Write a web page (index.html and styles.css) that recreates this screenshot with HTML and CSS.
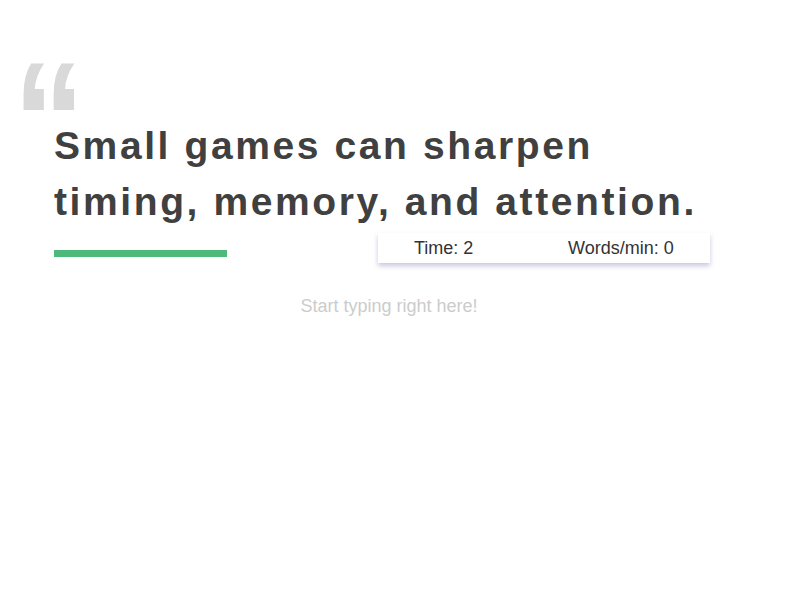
FILE: index.html
```html
<!DOCTYPE html>
<html>
<head>
<meta charset="utf-8">
<link rel="stylesheet" href="styles.css">
</head>
<body>
<main class="page">
  <blockquote class="quote">
    <h1 class="quote-text">Small games can sharpen timing, memory, and attention.</h1>
    <div class="quote-bar-row">
      <div class="quote-bar"></div>
      <div class="stats">
        <span class="stat">Time: 2</span>
        <span class="stat">Words/min: 0</span>
      </div>
    </div>
  </blockquote>
  <div class="typing">Start typing right here!</div>
</main>
</body>
</html>
```
FILE: styles.css
```css
html, body {
  margin: 0;
  padding: 0;
  background: #ffffff;
}
.page {
  font-family: "Liberation Sans", Arial, sans-serif;
  width: 800px;
}
.quote {
  position: relative;
  margin: 0;
  padding: 118px 0 0 54px;
}
.quote::before {
  content: "\201C";
  position: absolute;
  left: 13px;
  top: 37px;
  font-size: 150px;
  font-weight: bold;
  line-height: 150px;
  color: #d9d9d9;
  transform: scale(0.96, 1.1);
  transform-origin: 0 0;
}
.quote-text {
  position: relative;
  margin: 0;
  width: 650px;
  font-size: 39px;
  font-weight: bold;
  line-height: 56px;
  letter-spacing: 2.6px;
  color: #404041;
}
.quote-bar-row {
  display: flex;
  align-items: flex-start;
  margin-top: 3px;
}
.quote-bar {
  width: 173px;
  height: 7px;
  margin-top: 17px;
  background: #4fb87b;
}
.stats {
  display: flex;
  width: 332px;
  height: 30px;
  margin-left: 151px;
  align-items: center;
  background: #fff;
  box-shadow: 0 3px 5px rgba(110, 90, 160, 0.35);
  font-size: 18px;
  color: #333;
}
.stat:first-child {
  margin-left: 36px;
  width: 154px;
}
.typing {
  margin-top: 33px;
  padding-right: 22px;
  text-align: center;
  font-size: 18px;
  color: #cccccc;
}
```
